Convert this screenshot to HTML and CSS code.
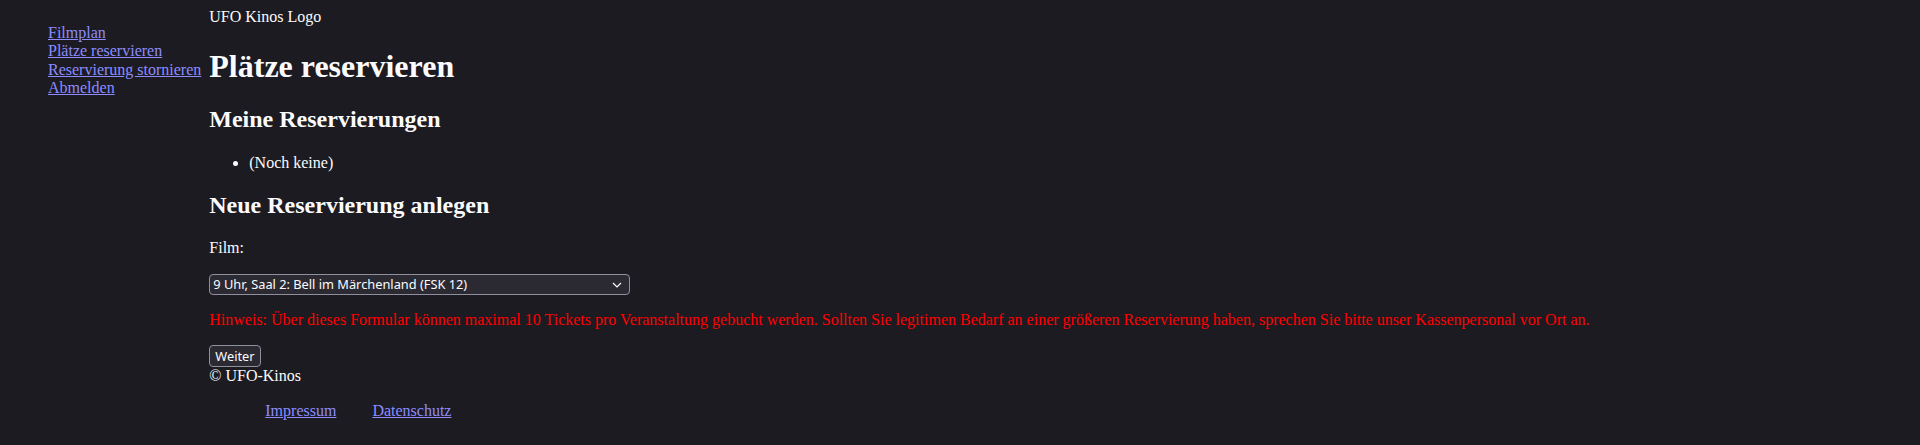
FILE: index.html
```html
<!DOCTYPE html>
<html lang="de">
<head>
<meta charset="utf-8">
<title>Plätze reservieren – UFO Kinos</title>
<link rel="stylesheet" href="styles.css">
</head>
<body>
<div class="page">
  <nav class="side-nav">
    <ul class="nav-list">
      <li><a href="#">Filmplan</a></li>
      <li><a href="#">Plätze reservieren</a></li>
      <li><a href="#">Reservierung stornieren</a></li>
      <li><a href="#">Abmelden</a></li>
    </ul>
  </nav>
  <div class="content">
    <div class="logo">UFO Kinos Logo</div>
    <main>
      <h1>Plätze reservieren</h1>
      <h2>Meine Reservierungen</h2>
      <ul>
        <li>(Noch keine)</li>
      </ul>
      <h2>Neue Reservierung anlegen</h2>
      <form>
        <p><label for="film">Film:</label></p>
        <p><span class="select-wrap"><select id="film" class="film-select">
          <option>9 Uhr, Saal 2: Bell im Märchenland (FSK 12)</option>
        </select><svg class="chevron" width="10" height="6" viewBox="0 0 10 6"><path d="M1 1 L5 5 L9 1" fill="none" stroke="#fbfbfe" stroke-width="1.2"/></svg></span></p>
        <p class="hint">Hinweis: Über dieses Formular können maximal 10 Tickets pro Veranstaltung gebucht werden. Sollten Sie legitimen Bedarf an einer größeren Reservierung haben, sprechen Sie bitte unser Kassenpersonal vor Ort an.</p>
        <button type="button" class="btn">Weiter</button>
      </form>
    </main>
    <footer>
      <div>© UFO-Kinos</div>
      <ul class="footer-links">
        <li><a href="#">Impressum</a></li>
        <li><a href="#">Datenschutz</a></li>
      </ul>
    </footer>
  </div>
</div>
</body>
</html>
```

FILE: styles.css
```css
html {
  background: #1c1b22;
}
body {
  margin: 8px;
  background: #1c1b22;
  color: #fbfbfe;
  font-family: "Liberation Serif", "Times New Roman", serif;
  font-size: 16px;
  line-height: 1.15;
}
a {
  color: #8c8cff;
}
.page {
  display: flex;
  gap: 8px;
  align-items: flex-start;
}
.nav-list {
  list-style: none;
  margin: 16px 0;
  padding-left: 40px;
}
.content {
  flex: 1;
}
h1 {
  font-size: 32px;
  margin: 21.44px 0;
}
h2 {
  font-size: 24px;
  margin: 19.92px 0;
}
.select-wrap {
  position: relative;
  display: inline-block;
  vertical-align: middle;
}
.film-select {
  appearance: none;
  -webkit-appearance: none;
  display: block;
  width: 421px;
  height: 21px;
  box-sizing: border-box;
  background: #2b2a33;
  color: #fbfbfe;
  border: 1px solid #8f8f9d;
  border-radius: 4px;
  font-family: "Noto Sans", "Open Sans", sans-serif;
  font-size: 12.8px;
  padding: 0 24px 0 3px;
  margin: 0;
}
.chevron {
  position: absolute;
  right: 8px;
  top: 8px;
  pointer-events: none;
}
.hint {
  color: #ff0000;
}
.btn {
  background: #2b2a33;
  color: #fbfbfe;
  border: 1px solid #8f8f9d;
  border-radius: 4px;
  font-family: "Noto Sans", "Open Sans", sans-serif;
  font-size: 12.8px;
  height: 22px;
  padding: 0 5px;
  margin: 0;
}
.footer-links {
  list-style: none;
  margin: 16px 0;
  padding-left: 40px;
  display: flex;
  gap: 36px;
}
.footer-links li {
  margin-left: 16px;
}
.footer-links li + li {
  margin-left: 0;
}
```
